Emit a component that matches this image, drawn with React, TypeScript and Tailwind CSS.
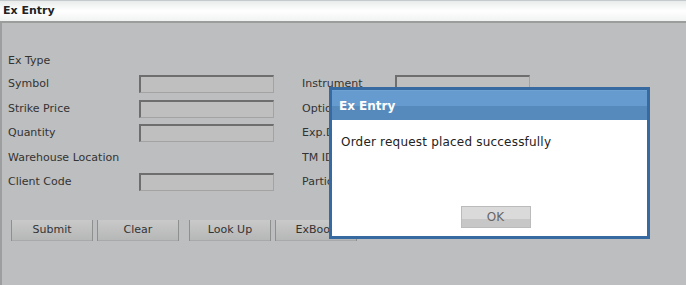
const font = { fontFamily: '"DejaVu Sans", Verdana, sans-serif' };

const leftRows = [
  { label: 'Symbol', input: true },
  { label: 'Strike Price', input: true },
  { label: 'Quantity', input: true },
  { label: 'Warehouse Location', input: false },
  { label: 'Client Code', input: true },
];

const rightRows = [
  { label: 'Instrument', input: true },
  { label: 'Option Type', input: false },
  { label: 'Exp.Date', input: false },
  { label: 'TM ID', input: false },
  { label: 'Participant', input: false },
];

function Field() {
  return (
    <div className="w-[135px] h-[18px] bg-[#bfbfbf] border-2 border-t-[#6e6e6e] border-l-[#6e6e6e] border-b-[#a3a3a3] border-r-[#a3a3a3] border-b-[1px] border-r-[1px]" />
  );
}

function Btn({ label }: { label: string }) {
  return (
    <button className="w-[82px] h-[21px] border-x border-[#8e8f8f] bg-gradient-to-b from-[#c9c9c9] to-[#b5b6b6] shadow-[inset_0_-1px_0_#a9a9a9] text-[11px] text-[#333] flex items-center justify-center">
      {label}
    </button>
  );
}

export default function App() {
  return (
    <div className="relative w-[686px] h-[285px] overflow-hidden bg-[#bdbebf] text-[11px] text-[#333]" style={font}>
      <div className="h-[23px] bg-gradient-to-b from-[#e9ebeb] via-white to-[#f1f2f2] border-t border-[#c5cacc] border-b-2 border-b-[#9b9c9c] flex items-center px-[3px]">
        <span className="font-bold text-[11px] text-[#222]">Ex Entry</span>
      </div>
      <div className="h-[262px] border-l-2 border-[#9d9e9f] pl-[6px] pt-[28px]">
        <div className="flex">
          <div className="w-[294px]">
            <div className="h-[21px] flex items-center">Ex Type</div>
            {leftRows.map((r) => (
              <div key={r.label} className="h-[24.5px] flex items-center">
                <span className="w-[131px]">{r.label}</span>
                {r.input && <Field />}
              </div>
            ))}
          </div>
          <div>
            <div className="h-[21px]" />
            {rightRows.map((r) => (
              <div key={r.label} className="h-[24.5px] flex items-center">
                <span className="w-[93px] overflow-hidden whitespace-nowrap">{r.label}</span>
                {r.input && <Field />}
              </div>
            ))}
          </div>
        </div>
        <div className="flex mt-[25px] ml-[3px]">
          <div className="flex gap-[4px]">
            <Btn label="Submit" />
            <Btn label="Clear" />
          </div>
          <div className="flex gap-[4px] ml-[10px]">
            <Btn label="Look Up" />
            <Btn label="ExBook" />
          </div>
        </div>
      </div>

      <div className="absolute left-[329px] top-[87px] w-[321px] h-[152px] border-[3px] border-[#386aa2] bg-white flex flex-col">
        <div className="h-[30px] flex items-center px-[7px] bg-[linear-gradient(#659bce_0%,#659bce_50%,#5689bc_50%,#5689bc_100%)] border-t border-[#6ea2d3]">
          <span className="text-white font-bold text-[12px]">Ex Entry</span>
        </div>
        <div className="px-[9px] pt-[13px] text-[12px] tracking-[0.2px] text-[#222]">Order request placed successfully</div>
        <div className="mt-auto mb-[8px] flex justify-center">
          <button className="w-[70px] h-[22px] border border-[#bbbbbb] bg-[linear-gradient(#dadada_0%,#dadada_62%,#c7c7c7_62%,#c7c7c7_100%)] text-[12px] text-[#666] ml-[12px]">
            OK
          </button>
        </div>
      </div>
    </div>
  );
}
